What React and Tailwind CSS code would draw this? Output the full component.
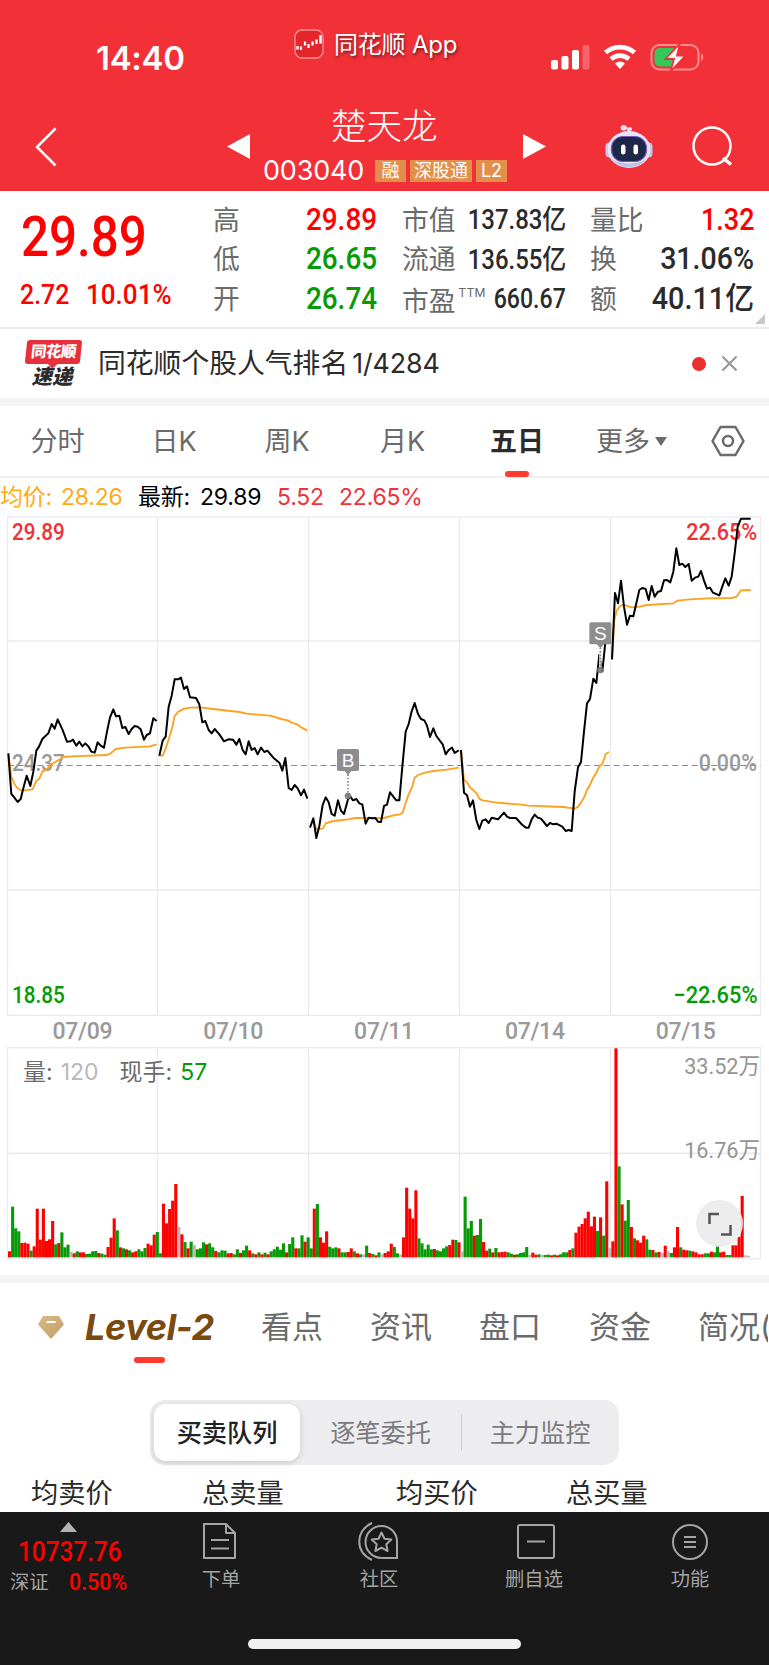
import React from 'react';

const RED = '#ff0000';
const GREEN = '#079a07';
const GRAY = '#b9b9b9';

// Price and average curves, one entry per trading day. Points are in the chart's own units (3 per pixel).
const DAYS = [
  {
    dx: 0, dy: 0,
    avg: '25,730 34,800 45,825 55,837 66,842 98,838 109,812 118,806 127,785 140,778 155,762 172,752 190,741 215,739 320,735 332,730 347,717 375,713 450,709 470,703',
    price: '25,730 34,852 41,860 53,876 62,867 70,835 80,797 91,828 100,785 109,722 117,710 127,687 145,670 155,642 164,656 173,628 187,658 201,695 211,694 219,689 229,707 238,695 247,709 256,700 265,709 274,725 284,728 293,697 302,707 312,713 321,665 330,622 340,598 348,619 358,617 367,654 376,651 386,672 395,657 404,648 413,650 422,658 432,689 440,675 450,670 460,625 470,633',
  },
  {
    dx: 0, dy: 0,
    avg: '478,737 488,737 497,715 508,682 516,655 524,618 535,605 552,596 572,593 600,592 640,597 718,606 740,611 810,617 845,627 863,631 875,638 893,644 905,653 922,662',
    price: '478,737 488,692 497,680 506,590 515,557 524,508 535,508 543,503 552,537 561,529 570,562 588,564 598,583 607,637 616,633 626,660 635,670 644,657 658,673 672,694 685,688 699,689 709,704 718,687 728,720 737,733 746,694 755,720 764,714 773,733 783,713 793,726 802,722 820,743 838,758 847,782 856,744 866,834 875,840 884,825 893,835 903,856 912,839 922,866',
  },
  {
    dx: 900, dy: 390,
    avg: '40,540 49,567 68,566 77,550 100,543 145,538 165,534 252,534 280,526 300,523 308,518 316,492 326,463 336,442 344,413 354,405 375,398 400,393 440,389 476,383',
    price: '30,563 40,535 49,594 58,558 68,495 77,472 86,487 95,522 104,527 114,481 123,512 132,522 144,478 152,471 159,481 169,477 178,490 187,493 197,551 206,533 216,535 226,534 234,545 243,546 252,498 261,494 270,457 280,470 289,481 298,481 307,380 317,275 326,252 335,214 344,189 354,222 363,237 373,241 381,257 390,291 400,265 409,288 428,313 437,343 446,330 456,323 464,339 476,331',
  },
  {
    dx: 1350, dy: 0,
    avg: '33,722 42,809 52,818 61,833 79,849 88,866 98,871 140,878 215,884 235,887 340,891 374,896 384,890 393,878 402,862 411,840 421,822 430,802 439,788 448,769 457,762 467,732 477,726',
    price: '33,720 42,848 51,856 60,890 69,871 79,930 88,957 97,932 107,928 116,939 125,923 144,928 162,908 171,920 180,924 198,924 217,945 228,953 236,953 245,928 254,914 263,923 273,926 291,948 300,939 310,943 319,941 337,950 347,963 356,960 365,963 374,845 384,772 393,756 402,665 411,580 420,567 430,506 439,519 448,434 457,484 467,388 477,388',
  },
  {
    dx: 1350, dy: 0,
    avg: '486,448 493,330 500,303 508,290 518,284 545,292 570,290 590,285 670,280 682,272 720,268 770,265 845,264 860,260 873,241 902,240',
    price: '486,448 495,249 504,280 513,212 522,290 531,344 540,317 550,319 559,280 568,240 577,234 587,237 596,270 605,228 614,260 624,245 633,243 642,211 651,210 661,217 670,185 679,115 688,165 697,161 706,171 716,162 725,212 735,203 745,200 753,183 762,212 771,236 780,233 789,248 808,256 817,229 826,205 836,227 845,200 854,130 863,50 873,26 902,26',
  },
];

// r = up, g = down, n = flat
const VOLUME = `r18 g152 g87 g78 r43 r44 r41 g20 r33 r146 r53 r146 r49 r54 r109 g39 r43 g75 g30 g38 n17 r12 g18 r15 r15 g10 g11 g18 g19 r13 g11 g8 r31 r59 r117 g81 r30 g27 r24 g21 r15 r18 g24 g18 g28 r41 r36 r68 g76 g12
r161 r102 r145 r170 r220 n91 r69 g46 r27 g47 n37 g24 g27 g45 r39 g42 g30 r19 g15 g21 g20 r12 r13 g9 g24 r13 g21 g35 r21 g12 r9 g15 r9 g14 r9 g18 g24 g32 g23 g42 r15 g40 g60 r27 g27 g66 r47 g60 g27
r146 g160 r60 r44 r78 g32 g27 g30 r27 g15 g15 r16 r27 g18 r12 g9 n9 g35 r13 g10 r6 g15 n9 r13 r18 r41 g31 g12 n9 r60 r209 r146 r117 r201 g57 g42 g24 g38 g24 r25 g21 g18 g27 g33 r37 r53 g52 r45 n18
g182 g87 g109 r65 g67 g115 r46 r20 g26 r15 g28 r15 r16 r17 g15 g11 r8 g9 g13 g15 g31 n8 r14 r8 g9 n7 g7 g8 r6 g8 r6 g9 g15 g15 r22 g27 r74 r92 r100 r117 r137 r93 r122 g79 r120 g65 r228 n27 r48
r627 g273 r159 g110 g172 r91 g57 r51 r44 r65 g54 g23 r22 g15 r16 n13 r35 n18 g13 r30 r91 g30 r23 r21 g20 r18 r15 r9 r9 g12 g12 r17 g15 g36 r15 r17 g7 g7 r36 r36 r62 r184 n6 n5`
  .split(/\s+/)
  .map((s) => ({ dir: s[0], h: Number(s.slice(1)) }));

const COLUMNS = [472.5, 925.5, 1378.5, 1831.5];

const RANGE = [
  { label: '高', value: '29.89', color: 'text-[#ff0000]' },
  { label: '低', value: '26.65', color: 'text-[#079a07]' },
  { label: '开', value: '26.74', color: 'text-[#079a07]' },
];

const PERIODS = [
  { label: '分时', width: 'w-[115px]' },
  { label: '日K', width: 'w-[118px]' },
  { label: '周K', width: 'w-[108px]' },
  { label: '月K', width: 'w-[123px]' },
  { label: '五日', width: 'w-[106px]', active: true },
];

function StatusBar() {
  return (
    <div className="flex h-[98px] items-start">
      <div className="ml-[96px] mt-[38px] w-[198px] font-['Inter'] text-[33px] font-semibold leading-10 tracking-[-0.3px]">14:40</div>
      <svg className="mt-[29px] h-[30px] w-[30px]" viewBox="0 0 30 30">
        <rect x="1" y="1" width="28" height="28" rx="7" fill="#e3262c" stroke="#fa8f92" strokeWidth="1.4" />
        <path d="M3.500 20.500V17M26.500 14.500V6" stroke="#fff" strokeWidth="2.400" />
        <path d="M7 21v-3.500M11 16.500v-4M14.500 19v-4M18.500 16.500v-4M22.500 15v-4.500" stroke="#fff" strokeWidth="2.200" />
      </svg>
      <div className="ml-[10px] mt-[27px] w-[217px] text-[24px] leading-9 tracking-[-0.2px] [text-shadow:1px_2px_3px_rgba(0,0,0,0.5)]">同花顺 App</div>
      <svg className="mt-[44px] h-[27px] w-[39px]" viewBox="0 0 39 27" fill="#fff">
        <rect x="0" y="16" width="7" height="9.500" rx="2" />
        <rect x="10.500" y="12" width="7" height="13.500" rx="2" />
        <rect x="21" y="6" width="7" height="19.500" rx="2" />
        <rect x="31.500" y="1" width="7" height="24.500" rx="2" opacity=".25" />
      </svg>
      <svg className="ml-[13px] mt-[44px] h-[26px] w-[35px]" viewBox="0 0 35 26" fill="none" stroke="#fff" strokeWidth="4.700">
        <path d="M2.500 8.500a22 22 0 0 1 29 0" />
        <path d="M8 15a14 14 0 0 1 18 0" />
        <path d="M17 25l-5-5.500a7.500 7.500 0 0 1 10 0z" fill="#fff" stroke="none" />
      </svg>
      <svg className="ml-[12px] mt-[43px] h-[29px] w-[54px]" viewBox="0 0 54 29">
        <rect x="1.500" y="2" width="47" height="24.500" rx="8" fill="none" stroke="#fa8f92" strokeWidth="2" />
        <path d="M9.500 5H24v18.500H9.500a5 5 0 0 1-5-5v-8.500a5 5 0 0 1 5-5z" fill="#34c759" />
        <path d="M51 10.500c3 1.200 3 6.300 0 7.500z" fill="#fa8f92" />
        <path d="M30 .5L15.500 16H24l-3.500 12.500L35.500 12.500H27z" fill="#fff" stroke="#f23038" strokeWidth="1.800" />
      </svg>
    </div>
  );
}

function TitleBar() {
  return (
    <div className="flex h-[93px] items-start">
      <svg className="ml-[34px] mt-[29px] h-10 w-6" viewBox="0 0 24 40" fill="none" stroke="#fff" strokeWidth="2.500">
        <path d="M21.500 1.500L3 20l18.500 18.500" />
      </svg>
      <svg className="ml-[169px] mt-[35px] h-[27px] w-6" viewBox="0 0 24 27" fill="#fff"><path d="M0 13.500L23 1v25z" /></svg>
      <div className="ml-[12px] w-[244px]">
        <div className="mt-[4px] h-[52px] pl-[68px] text-[35.500px] font-light leading-[50px]">楚天龙</div>
        <div className="mt-[5px] flex h-[24px] items-center">
          <span className="w-[112px] shrink-0 font-['Inter'] text-[27px] leading-6 tracking-[-0.2px]">003040</span>
          <span className="mr-[4px] h-[22px] w-[31px] shrink-0 bg-[#e38f4c] text-center text-[18px] leading-[21px]">融</span>
          <span className="mr-[4px] h-[22px] w-[62px] shrink-0 bg-[#e38f4c] text-center text-[18px] leading-[21px]">深股通</span>
          <span className="h-[22px] w-[31px] shrink-0 bg-[#e38f4c] text-center text-[18px] leading-[22px]">L2</span>
        </div>
      </div>
      <svg className="ml-[16px] mt-[35px] h-[27px] w-6" viewBox="0 0 24 27" fill="#fff"><path d="M23 13.500L0 1v25z" /></svg>
      <svg className="ml-[58px] mt-[26px] h-[46px] w-[48px]" viewBox="0 0 48 46">
        <path d="M24 9c0-4-2-5-4-6" fill="none" stroke="#d5d7f2" strokeWidth="2.500" />
        <circle cx="18.500" cy="3.800" r="2.800" fill="#f0e4ee" />
        <circle cx="25" cy="5" r="2" fill="#dfe2fb" />
        <rect x="0.500" y="18.500" width="8" height="15" rx="4" fill="#c3c6ea" />
        <rect x="39.500" y="18.500" width="8" height="15" rx="4" fill="#c3c6ea" />
        <ellipse cx="24" cy="25.500" rx="21.500" ry="18.500" fill="#e4e5f6" />
        <path d="M7 35c7 11 27 11 34 0-7 6-27 6-34 0z" fill="#bfc2e6" />
        <rect x="6.500" y="12.500" width="35" height="25" rx="11.500" fill="#1d2748" stroke="#7a55c8" strokeWidth="1.200" />
        <rect x="16" y="20.500" width="4.500" height="10" rx="2.200" fill="#fff" />
        <rect x="28.500" y="20.500" width="4.500" height="10" rx="2.200" fill="#fff" />
      </svg>
      <svg className="ml-[39px] mt-[28px] h-[42px] w-[42px]" viewBox="0 0 42 42" fill="none" stroke="#fff" strokeWidth="2.500">
        <circle cx="20" cy="20" r="18.500" />
        <path d="M31 32l8 6.500" strokeWidth="3.500" />
      </svg>
    </div>
  );
}

function StatRow({ label, sup, children }) {
  return (
    <div className="flex h-[39.500px] items-center justify-between">
      <span className={`relative whitespace-nowrap text-[26.800px] font-normal text-[#6b6b6b] ${sup ? 'top-[3px]' : 'top-[1px]'}`}>
        {label}
        {sup && <sup className="-top-[14px] ml-[3px] text-[12.500px] tracking-[0.5px]">{sup}</sup>}
      </span>
      {children}
    </div>
  );
}

function QuotePanel() {
  return (
    <div className="relative flex h-[138px] border-b-2 border-[#eaeaea] font-['Roboto','Noto_Sans_CJK_SC',sans-serif] font-medium">
      <div className="ml-[21px] w-[192px] text-[#ff0000]">
        <div className="mt-[13px] h-[66px] origin-left scale-x-[0.88] text-[56px] leading-[66px]">29.89</div>
        <div className="mt-[9px] flex text-[28px] leading-8">
          <span className="-ml-px w-[66px] origin-left scale-x-[0.89]">2.72</span>
          <span className="origin-left scale-x-[0.93]">10.01%</span>
        </div>
      </div>
      <div className="mt-[9px] w-[164px]">
        {RANGE.map((r) => (
          <StatRow key={r.label} label={r.label}>
            <span className={`origin-right scale-x-[0.9] text-[31px] ${r.color}`}>{r.value}</span>
          </StatRow>
        ))}
      </div>
      <div className="ml-[25px] mt-[9px] w-[164px]">
        <StatRow label="市值"><span className="-ml-8 origin-right scale-x-[0.87] text-[27.500px] text-[#2b2b2b]">137.83亿</span></StatRow>
        <StatRow label="流通"><span className="-ml-8 origin-right scale-x-[0.87] text-[27.500px] text-[#2b2b2b]">136.55亿</span></StatRow>
        <StatRow label="市盈" sup="TTM"><span className="-ml-8 origin-right scale-x-[0.84] text-[27.500px] text-[#2b2b2b]">660.67</span></StatRow>
      </div>
      <div className="ml-[24px] mt-[9px] w-[164px]">
        <StatRow label="量比"><span className="origin-right scale-x-[0.87] text-[31px] text-[#ff0000]">1.32</span></StatRow>
        <StatRow label="换"><span className="origin-right scale-x-[0.92] text-[31px] text-[#2b2b2b]">31.06%</span></StatRow>
        <StatRow label="额"><span className="origin-right scale-x-[0.93] text-[31px] text-[#2b2b2b]">40.11亿</span></StatRow>
      </div>
      <svg className="absolute bottom-[3px] right-[4px] h-[10px] w-[10px]" viewBox="0 0 11 11" fill="#c8c8c8"><path d="M11 0v11H0z" /></svg>
    </div>
  );
}

function NewsRow() {
  return (
    <div className="flex h-[69px] items-center">
      <div className="ml-[24px] flex w-[58px] flex-col items-center font-black italic">
        <div className="relative flex h-[24px] w-[55px] -skew-x-6 items-center justify-center rounded-[3px] bg-[#e8303a] text-[15.500px] not-italic tracking-[-0.5px] text-white">
          同花顺
          <span className="absolute -bottom-[3px] left-[24px] h-[8px] w-[8px] rotate-45 bg-[#e8303a]" />
        </div>
        <div className="mt-[2px] h-[22px] -translate-x-px text-[20.500px] leading-[22px] text-[#2b2b2b]">速递</div>
      </div>
      <div className="ml-[16px] grow whitespace-nowrap text-[27.800px] text-[#2b2b2b]">
        同花顺个股人气排名<span className="ml-[4px] text-[26.800px] tracking-[-0.1px]">1/4284</span>
      </div>
      <span className="h-[14px] w-[14px] rounded-full bg-[#ea2f31]" />
      <svg className="ml-[15px] mr-[31px] h-[17px] w-[17px]" viewBox="0 0 18 18" stroke="#999" strokeWidth="2.300"><path d="M1.500 1.500l15 15M16.500 1.500l-15 15" /></svg>
    </div>
  );
}

function PeriodTabs() {
  return (
    <div className="flex h-[72px] items-center border-b-2 border-[#efefef] text-[27px] text-[#6b6b6b]">
      {PERIODS.map((p) => (
        <div key={p.label} className={`relative flex h-full items-center justify-center pt-[3px] ${p.width} ${p.active ? 'font-bold text-[#2b2b2b]' : ''}`}>
          {p.label}
          {p.active && <span className="absolute -bottom-[1px] h-[6px] w-[24px] rounded-full bg-[#ff3b30]" />}
        </div>
      ))}
      <div className="ml-[26px] flex items-center pt-[3px]">
        更多
        <svg className="mb-[2px] ml-[5px] h-[9px] w-[12px]" viewBox="0 0 12 9" fill="#6b6b6b"><path d="M0 0h12L6 9z" /></svg>
      </div>
      <svg className="ml-[44px] h-[32px] w-[34px]" viewBox="0 0 34 32" fill="none" stroke="#6b6b6b" strokeWidth="2.500">
        <path d="M9.500 2h15L32.500 16l-8 14h-15L1.500 16z" strokeLinejoin="round" />
        <circle cx="17" cy="16" r="5" />
      </svg>
    </div>
  );
}

function Marker({ x, y, stem, letter }) {
  return (
    <g transform={`translate(${x} ${y})`}>
      <path d={`M0 66V${stem}`} stroke="#fff" strokeWidth="8" opacity=".8" />
      <path d={`M0 66V${stem}`} stroke="#8e8e8e" strokeWidth="5" strokeDasharray="5 5" />
      <circle cx="0" cy={stem} r="10" fill="#777" opacity=".9" />
      <path d="M-12 64h24L0 78z" fill="#8e8e8e" />
      <rect x="-33" y="0" width="66" height="66" rx="5" fill="#8e8e8e" />
      <text x="0" y="53" textAnchor="middle" fontSize="57" fill="#fff" fontFamily="Liberation Sans">{letter}</text>
    </g>
  );
}

function PriceChart() {
  const labels = "absolute font-['Roboto'] text-[23.500px] font-medium leading-6";
  return (
    <div className="relative h-[510px]">
      <svg className="h-[510px] w-[769px]" viewBox="0 0 2307 1530" fill="none">
        <rect x="22.500" y="21" width="2259" height="1495" stroke="#ebebeb" strokeWidth="4" />
        <path d="M22 393H2281M22 1140H2281" stroke="#ebebeb" strokeWidth="5" />
        {COLUMNS.map((x) => <path key={x} d={`M${x} 21V1516`} stroke="#ebebeb" strokeWidth="4" />)}
        <path d="M24 766.500H2281" stroke="#8a8a8a" strokeWidth="3.500" strokeDasharray="18 11.300" />
      </svg>
      <span className={`${labels} left-[12px] top-[10px] origin-left scale-x-[0.88] text-[#f03238]`}>29.89</span>
      <span className={`${labels} right-[12px] top-[10px] origin-right scale-x-[0.92] text-[#f03238]`}>22.65%</span>
      <span className={`${labels} left-[12px] top-[241px] origin-left scale-x-[0.88] text-[#999]`}>24.37</span>
      <span className={`${labels} right-[12px] top-[241px] origin-right scale-x-[0.91] text-[#999]`}>0.00%</span>
      <span className={`${labels} left-[12px] top-[473px] origin-left scale-x-[0.88] text-[#079a07]`}>18.85</span>
      <span className={`${labels} right-[12px] top-[473px] origin-right scale-x-[0.93] text-[#079a07]`}>−22.65%</span>
      <svg className="absolute left-0 top-0 h-[510px] w-[769px]" viewBox="0 0 2307 1530" fill="none">
        {DAYS.map((d, i) => (
          <g key={i} transform={`translate(${d.dx} ${d.dy})`} strokeLinejoin="round">
            <polyline points={d.avg} stroke="#ffa01e" strokeWidth="5.500" />
            <polyline points={d.price} stroke="#000" strokeWidth="6" />
          </g>
        ))}
        <Marker x={1044} y={717} stem={141} letter="B" />
        <Marker x={1801} y={337} stem={143} letter="S" />
      </svg>
    </div>
  );
}

function VolumeChart() {
  const fills = { r: RED, g: GREEN, n: GRAY };
  const scale = "absolute right-[9px] origin-right scale-x-[0.96] font-['Roboto','Noto_Sans_CJK_SC',sans-serif] text-[22.500px] leading-8 text-[#959595]";
  return (
    <div className="relative h-[213px]">
      <svg className="h-[213px] w-[769px]" viewBox="0 0 2307 639" fill="none">
        <rect x="22.500" y="2" width="2259" height="633" stroke="#ebebeb" strokeWidth="4" />
        <path d="M22 319H2281" stroke="#ebebeb" strokeWidth="5" />
        {COLUMNS.map((x) => <path key={x} d={`M${x} 2V635`} stroke="#ebebeb" strokeWidth="4" />)}
        {VOLUME.map((v, i) => (
          <rect key={i} x={24 + i * 9.235} y={631 - v.h} width="9.300" height={v.h} fill={fills[v.dir]} />
        ))}
      </svg>
      <div className="absolute left-[23px] top-[9px] flex text-[23px] leading-8 text-[#6b6b6b]">
        <span>量:</span>
        <span className="ml-[8px] text-[#b9b9b9]">120</span>
        <span className="ml-[21px]">现手:</span>
        <span className="ml-[8px] text-[#079a07]">57</span>
      </div>
      <span className={`${scale} top-[3px]`}>33.52万</span>
      <span className={`${scale} top-[87px]`}>16.76万</span>
      <div className="absolute left-[696px] top-[153px] flex h-[47px] w-[47px] items-center justify-center rounded-full bg-[#ebebeb]/90">
        <svg className="h-6 w-6" viewBox="0 0 24 24" fill="none" stroke="#555" strokeWidth="2.500"><path d="M1.500 12V2H11M22.500 13v9.500H13" /></svg>
      </div>
    </div>
  );
}

function Level2Section() {
  return (
    <div className="h-[229px]">
      <div className="flex h-[88px] items-center whitespace-nowrap text-[31px] text-[#6b6b6b]">
        <svg className="ml-[38px] h-[24px] w-[26px]" viewBox="0 0 26 24">
          <defs>
            <linearGradient id="gem" x1="0" y1="0" x2="1" y2="1">
              <stop offset="0" stopColor="#d8bb8a" />
              <stop offset="1" stopColor="#c79c62" />
            </linearGradient>
          </defs>
          <path d="M5 1h16l5 8.500L13 24 0 9.500z" fill="url(#gem)" />
          <path d="M8.500 7h9" stroke="#fff" strokeWidth="2" />
        </svg>
        <div className="relative ml-[21px] flex h-full w-[131px] items-center">
          <span className="font-['Inter'] text-[36px] font-bold italic tracking-[-0.4px] text-[#7a4a0e]">Level-2</span>
          <span className="absolute left-[49px] top-[74px] h-[6px] w-[31px] rounded-full bg-[#ff3b30]" />
        </div>
        <span className="ml-[45px] w-[109px]">看点</span>
        <span className="w-[109px]">资讯</span>
        <span className="w-[110px]">盘口</span>
        <span className="w-[109px]">资金</span>
        <span className="w-[70px] overflow-hidden">简况(</span>
      </div>
      <div className="ml-[150px] mt-[29px] flex h-[65px] w-[469px] items-center rounded-[15px] bg-[#ededf0] text-[25.200px] text-[#7b7b7f]">
        <div className="ml-[4px] flex h-[57px] w-[146px] items-center justify-center rounded-[12px] bg-white pt-[2px] font-medium text-[#222] shadow-[0_2px_6px_rgba(0,0,0,0.15)]">买卖队列</div>
        <div className="w-[161px] pt-[2px] text-center">逐笔委托</div>
        <div className="h-[37px] w-px bg-[#cfcfd3]" />
        <div className="grow pr-[1px] pt-[2px] text-center">主力监控</div>
      </div>
      <div className="flex h-[47px] items-center pl-[31px] pt-[11px] text-[27.200px] text-[#2b2b2b]">
        <span className="w-[171px]">均卖价</span>
        <span className="w-[194px]">总卖量</span>
        <span className="w-[170px]">均买价</span>
        <span>总买量</span>
      </div>
    </div>
  );
}

function BottomBar() {
  return (
    <div className="relative flex h-[153px] bg-[#191919] text-[19.300px] leading-6 text-[#a5a5a5]">
      <div className="w-[140px] font-['Roboto','Noto_Sans_CJK_SC',sans-serif]">
        <svg className="ml-[60px] mt-[10px] h-[10px] w-[17px]" viewBox="0 0 17 10" fill="#b5b5b5"><path d="M8.500 0L17 10H0z" /></svg>
        <div className="ml-[18px] mt-[4px] h-[32px] w-[130px] origin-left scale-x-[0.87] text-[28px] font-medium leading-8 text-[#ff0000]">10737.76</div>
        <div className="mt-[3px] flex">
          <span className="ml-[10px] w-[59px]">深证</span>
          <span className="origin-left scale-x-[0.93] text-[23px] font-medium text-[#ff0000]">0.50%</span>
        </div>
      </div>
      <div className="ml-[50px] flex w-[60px] flex-col items-center">
        <svg className="mt-[10px] h-[38px] w-[38px]" viewBox="0 0 38 38" fill="none" stroke="#a5a5a5" strokeWidth="2">
          <path d="M3 2h22l9 9v25H3zM25 2v9h9M10 18h18M10 26.500h18" strokeLinejoin="round" />
        </svg>
        <span className="ml-[2px] mt-[7px] whitespace-nowrap">下单</span>
      </div>
      <div className="ml-[98px] flex w-[60px] flex-col items-center">
        <svg className="mt-[10px] h-[39px] w-[41px]" viewBox="0 0 41 39" fill="none" stroke="#a5a5a5" strokeWidth="2">
          <path d="M23.500 4A15.500 15.500 0 1 0 23.500 36H39V19.500A15.500 15.500 0 0 0 23.500 4z" />
          <path d="M14 1C-3 9-3 30 14 38" />
          <path d="M23.500 10.500l3 6.200 6.800.8-5 4.700 1.300 6.800-6.100-3.300-6.100 3.300 1.300-6.800-5-4.700 6.800-.8z" strokeLinejoin="round" />
        </svg>
        <span className="ml-[2px] mt-[6px] whitespace-nowrap">社区</span>
      </div>
      <div className="ml-[98px] flex w-[60px] flex-col items-center">
        <svg className="mt-[11px] h-[37px] w-[40px]" viewBox="0 0 40 37" fill="none" stroke="#a5a5a5" strokeWidth="2">
          <rect x="2" y="2" width="36" height="33" rx="2" />
          <path d="M11 18.500h18" />
        </svg>
        <span className="mr-[4px] mt-[7px] whitespace-nowrap">删自选</span>
      </div>
      <div className="ml-[94px] flex w-[60px] flex-col items-center">
        <svg className="mt-[11px] h-[38px] w-[38px]" viewBox="0 0 38 38" fill="none" stroke="#a5a5a5" strokeWidth="2">
          <circle cx="19" cy="19" r="17" />
          <path d="M13 14h12M13 19h12M13 24h12" />
        </svg>
        <span className="mt-[6px] whitespace-nowrap">功能</span>
      </div>
      <div className="absolute bottom-[16px] left-[248px] h-[10px] w-[273px] rounded-full bg-[#f0f0f0]" />
    </div>
  );
}

export default function App() {
  return (
    <div className="h-[1665px] w-[769px] overflow-hidden bg-white font-['Inter','Noto_Sans_CJK_SC',sans-serif]">
      <div className="bg-[#f23038] text-white">
        <StatusBar />
        <TitleBar />
      </div>
      <QuotePanel />
      <NewsRow />
      <div className="h-[8px] bg-[#f4f4f4]" />
      <PeriodTabs />
      <div className="flex h-[32px] items-center whitespace-nowrap pt-[6px] text-[23px] tracking-[-0.2px]">
        <span className="w-[61px] text-[#ffab12]">均价:</span>
        <span className="w-[77px] text-[#ffab12]">28.26</span>
        <span className="w-[62px]">最新:</span>
        <span className="w-[77px]">29.89</span>
        <span className="w-[62px] text-[#f03238]">5.52</span>
        <span className="text-[#f03238]">22.65%</span>
      </div>
      <PriceChart />
      <div className="flex h-[27px] pl-[7px] font-['Roboto'] text-[23px] font-medium leading-[23px] tracking-[-0.3px] text-[#999]">
        {['07/09', '07/10', '07/11', '07/14', '07/15'].map((d) => (
          <span key={d} className="w-[150.800px] text-center">{d}</span>
        ))}
      </div>
      <VolumeChart />
      <div className="mt-[15px] h-[8px] bg-[#f4f4f4]" />
      <Level2Section />
      <BottomBar />
    </div>
  );
}
